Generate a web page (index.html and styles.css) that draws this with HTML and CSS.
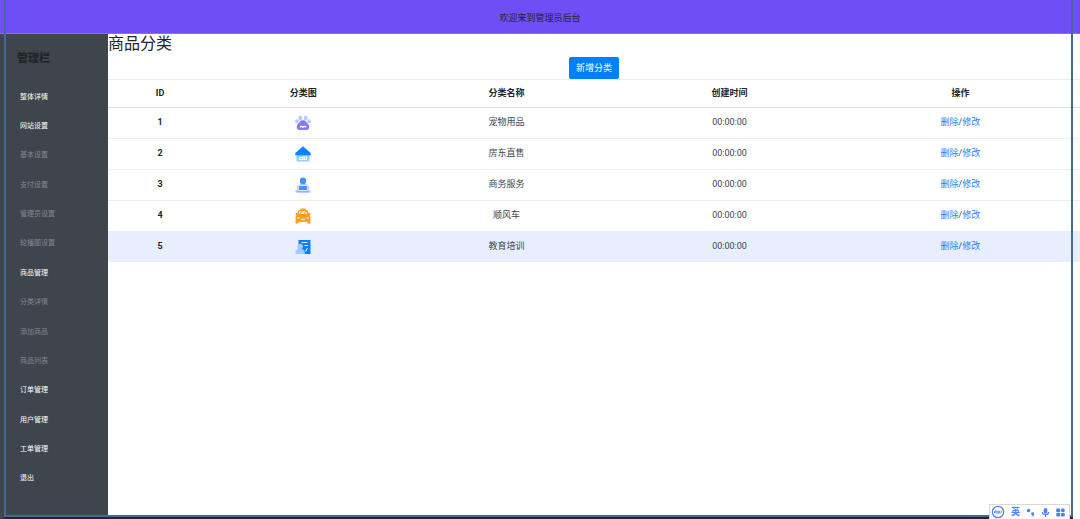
FILE: index.html
```html
<!DOCTYPE html>
<html lang="zh-CN">
<head>
<meta charset="utf-8">
<title>商品分类</title>
<link rel="stylesheet" href="styles.css">
</head>
<body>
<div class="page">
  <header class="topbar">欢迎来到管理员后台</header>
  <div class="body">
    <aside class="sidebar">
      <h2 class="sidebar-title">管理栏</h2>
      <nav class="nav">
        <a href="#" class="nav-link">整体详情</a>
        <a href="#" class="nav-link">网站设置</a>
        <a href="#" class="nav-link sub">基本设置</a>
        <a href="#" class="nav-link sub">支付设置</a>
        <a href="#" class="nav-link sub">管理员设置</a>
        <a href="#" class="nav-link sub">轮播图设置</a>
        <a href="#" class="nav-link">商品管理</a>
        <a href="#" class="nav-link sub">分类详情</a>
        <a href="#" class="nav-link sub">添加商品</a>
        <a href="#" class="nav-link sub">商品列表</a>
        <a href="#" class="nav-link">订单管理</a>
        <a href="#" class="nav-link">用户管理</a>
        <a href="#" class="nav-link">工单管理</a>
        <a href="#" class="nav-link">退出</a>
      </nav>
    </aside>
    <main class="content">
      <h1 class="title">商品分类</h1>
      <div class="actions"><button type="button" class="add">新增分类</button></div>
      <table class="table">
        <colgroup><col class="c-id"><col class="c-pic"><col class="c-name"><col class="c-time"><col class="c-op"></colgroup>
        <thead>
          <tr><th scope="col">ID</th><th scope="col">分类图</th><th scope="col">分类名称</th><th scope="col">创建时间</th><th scope="col">操作</th></tr>
        </thead>
        <tbody>
          <tr>
            <th scope="row">1</th>
            <td><svg class="icon" viewBox="0 0 16 16"><g fill="#b9cdfb"><ellipse cx="5.3" cy="3" rx="2" ry="2.5"/><ellipse cx="10.7" cy="3" rx="2" ry="2.5"/><ellipse cx="2" cy="6.4" rx="1.9" ry="2.1"/><ellipse cx="14" cy="6.4" rx="1.9" ry="2.1"/></g><path fill="#8a78f5" d="M8 5.300c2.800 0 3.300 2.200 5 3.700 2 1.800 1.700 5.900-1.500 6.100h-7C1.300 14.900 1 10.800 3 9c1.700-1.500 2.200-3.700 5-3.700z"/><path fill="none" stroke="#fff" stroke-width="1.300" d="M5 12.300c.9-1.200 2-1.200 3 0 1-1.200 2.100-1.200 3 0"/></svg></td>
            <td>宠物用品</td><td>00:00:00</td><td><a href="#">删除</a>/<a href="#">修改</a></td>
          </tr>
          <tr>
            <th scope="row">2</th>
            <td><svg class="icon" viewBox="0 0 16 16"><path fill="#9dccfb" d="M1.500 8h13v7.500h-13z"/><path fill="#0a84ff" d="M8 .3 15.700 7v2.200H.3V7z"/><path fill="none" stroke="#fff" stroke-width="1.100" d="M4.500 11.500h3v2h-3zM9 11h2.500v2.500H9z"/></svg></td>
            <td>房东直售</td><td>00:00:00</td><td><a href="#">删除</a>/<a href="#">修改</a></td>
          </tr>
          <tr>
            <th scope="row">3</th>
            <td><svg class="icon" viewBox="0 0 16 16"><path fill="#b5ccff" d="M.5 15.500v-2l1.500-.5V9l3-2h6l3 2v4l1.500.5v2z"/><path fill="#4c8dff" d="M5 3c0-3.200 6-3.200 6 0v2c0 1-1 2-1.500 2.300h-3C6 7 5 6 5 5z"/><path fill="#4c8dff" stroke="#fff" stroke-width=".7" d="M3.500 8.500h9v5h-9z"/><path fill="#8db4ff" d="M2 14h12v1.500H2z"/></svg></td>
            <td>商务服务</td><td>00:00:00</td><td><a href="#">删除</a>/<a href="#">修改</a></td>
          </tr>
          <tr>
            <th scope="row">4</th>
            <td><svg class="icon" viewBox="0 0 16 16"><path fill="#f99d1c" d="M5.500.6h5v1.200c1.500.2 2.200.8 2.700 2.200l.4 1h1.600v2l-.8.4c.8.8 1 1.600 1 2.600v5.500h-3v-1.800H3.600v1.800h-3V10c0-1 .2-1.800 1-2.600L.8 7V5h1.600l.4-1c.5-1.400 1.200-2 2.700-2.200z"/><path fill="#fff1d9" d="M4.600 3.200h6.800l1 2.800H3.600zM2.300 9l2.300.6v1.200l-2.300-.4zM13.700 9l-2.300.6v1.200l2.300-.4zM6 10.800h4v1H6z"/><path stroke="#f99d1c" d="m5 6 2-2.500M9 6l2-2.500"/></svg></td>
            <td>顺风车</td><td>00:00:00</td><td><a href="#">删除</a>/<a href="#">修改</a></td>
          </tr>
          <tr class="active">
            <th scope="row">5</th>
            <td><svg class="icon" viewBox="0 0 16 16"><path fill="#0a7cff" d="M3.500 1h12v14h-12z"/><path fill="none" stroke="#e8f1ff" stroke-width="1.100" d="M6.500 3.500h6M9.500 6.500h3.500M12.500 9l-2 3.500"/><circle cx="5.200" cy="7.500" r="2.800" fill="#a4cbff"/><path fill="#a4cbff" d="M.5 15v-2c0-2 1.700-3 4-3h1.300c2.500 0 4 1.500 4 3.500V15z"/></svg></td>
            <td>教育培训</td><td>00:00:00</td><td><a href="#">删除</a>/<a href="#">修改</a></td>
          </tr>
        </tbody>
      </table>
    </main>
  </div>
  <div class="frame"></div>
  <div class="ime">
    <svg class="ime-logo" viewBox="0 0 14 14" fill="none" stroke="#4a82f7"><circle cx="7" cy="7" r="5.700" stroke-width="1.200"/><path stroke-width=".9" d="M3.200 8.300 4 5.800h1.200L4.800 8.300M6.300 5.800l-.5 2.500M7.400 5.800 7 8.300h1.200l.5-2.500M10.600 5.600 9.800 8.400"/></svg>
    <span class="ime-lang">英</span>
    <svg class="ime-icon" viewBox="0 0 10 10" fill="#4a82f7"><circle cx="2.800" cy="2.800" r="2"/><path d="M6 5.200c1.200-.9 3-.2 3 1.500C9 8.300 8 9.300 6.600 9.600l-.3-.8c.6-.2 1-.6 1-1C6 7.700 5.300 6.200 6 5.200z"/></svg>
    <svg class="ime-icon" viewBox="0 0 10 10"><rect x="3" y="0" width="4" height="6.400" rx="2" fill="#4a82f7"/><path fill="none" stroke="#4a82f7" stroke-width="1.200" d="M1.500 4.500c0 4 7 4 7 0M5 7.500V10"/></svg>
    <svg class="ime-icon" viewBox="0 0 10 10" fill="#4a82f7"><rect x=".3" y=".6" width="4.200" height="4" rx=".5"/><rect x="5.500" y=".6" width="4.200" height="4" rx="1.500"/><rect x=".3" y="5.500" width="4.200" height="4" rx=".5"/><rect x="5.500" y="5.500" width="4.200" height="4" rx=".5"/></svg>
  </div>
</div>
</body>
</html>
```
FILE: styles.css
```css
* { box-sizing: border-box; }
body {
  margin: 0;
  font-family: Roboto, "Noto Sans CJK SC", sans-serif;
  font-size: 9px;
  line-height: 14px;
  color: #212529;
  background: #fff;
}
a { color: #1a86ff; text-decoration: none; }
.page {
  position: relative;
  display: flex;
  flex-direction: column;
  min-height: 100vh;
  overflow: hidden;
}
.topbar {
  padding: 11px 10px 8px;
  border-bottom: 1px solid #8a70f7;
  text-align: center;
  background: #6f4ff5;
}
.body { display: flex; flex: 1; }
.sidebar {
  display: flex;
  flex-direction: column;
  width: 10%;
  padding: 17px 0 26px;
  background: #3e454d;
}
.sidebar-title {
  margin: 0 0 15px;
  padding-left: 17px;
  font-size: 11px;
  line-height: 16px;
  font-weight: 900;
  color: #212529;
}
.nav { display: flex; flex: 1; flex-direction: column; }
.nav-link {
  display: flex;
  flex: 1;
  align-items: center;
  padding-left: 20px;
  font-size: 7px;
  color: #fff;
}
.nav-link.sub { color: #85888b; }
.content { flex: 1; }
.title {
  margin: 0;
  font-size: 16px;
  line-height: 20px;
  font-weight: 400;
}
.actions { display: flex; justify-content: center; padding: 3px 0 0; }
.add {
  padding: 4px 7px;
  border: 0;
  border-radius: 2px;
  font: inherit;
  color: #fff;
  background: #0080ff;
}
.table {
  width: 100%;
  table-layout: fixed;
  border-collapse: collapse;
  text-align: center;
}
.c-id { width: 10.7%; }
.c-pic { width: 18.8%; }
.c-name { width: 23%; }
.c-time { width: 22.9%; }
.c-op { width: 24.6%; }
.table th, .table td {
  padding: 7px 4px;
  border-top: 1px solid #eceeef;
  vertical-align: top;
}
.table thead th { padding: 6px 4px 7px; border-bottom: 1px solid #dee2e6; }
.table tbody td { color: #40464c; }
.icon { display: block; width: 16px; height: 16px; margin: 0 auto; }
.table tbody .active { background: #e8eefe; }
.frame {
  position: absolute;
  inset: 0 7px 2px 4px;
  border: solid #41699a;
  border-width: 0 2px 2px;
  box-shadow: 0 3px 0 #22272e;
  pointer-events: none;
}
.ime {
  position: absolute;
  right: 10px;
  bottom: 0;
  display: flex;
  align-items: center;
  gap: 6px;
  padding: 0 4px 0 1px;
  border: 1px solid #d5d8dc;
  border-bottom: 0;
  background: #fff;
}
.ime-logo { width: 14px; height: 14px; }
.ime-lang { font-size: 9px; font-weight: 700; color: #4a82f7; }
.ime-icon { width: 9px; height: 9px; }
```
